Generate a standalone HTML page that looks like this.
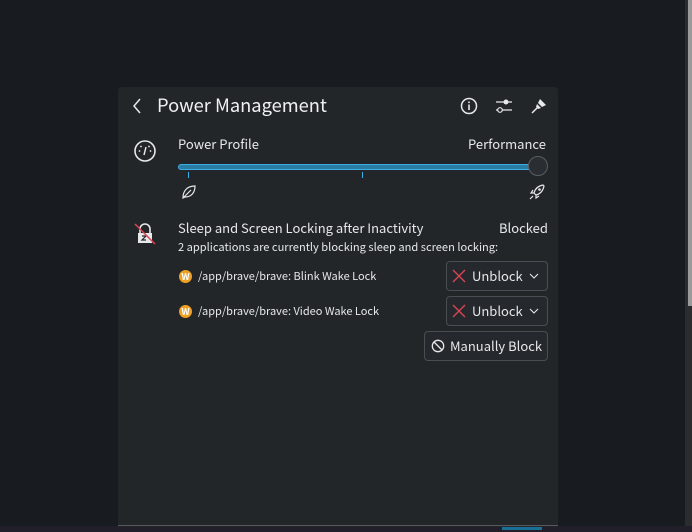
<!DOCTYPE html>
<html><head><style>
*{margin:0;padding:0;box-sizing:border-box}
body{width:692px;height:532px;background:#181b20;position:relative;overflow:hidden;font-family:"Noto Sans CJK SC","Liberation Sans",sans-serif;color:#e6e8ea}
.abs{position:absolute}
#panel{left:118px;top:87px;width:440px;height:440px;background:#232629;border-radius:4px 4px 0 0}
.t{position:absolute;white-space:nowrap;line-height:1}
.btn{position:absolute;border:1px solid #4a4e53;border-radius:4px;background:#25282c}
</style></head><body>
<div class="abs" style="left:685px;top:0;width:7px;height:532px;background:#2b2c2e"></div>
<div class="abs" style="left:688px;top:0;width:4px;height:306px;background:#9a9a9a"></div>
<div class="abs" style="left:0;top:526px;width:692px;height:6px;background:#221f2a"></div>
<div id="panel" class="abs"></div>
<div class="abs" style="left:118px;top:525px;width:440px;height:1px;background:#55585c"></div>
<div class="abs" style="left:502px;top:527px;width:40px;height:3px;background:#1a6f96"></div>

<svg class="abs" style="left:130px;top:97px" width="14" height="18"><path d="M10 2 L4 9 L10 16" stroke="#e6e8ea" stroke-width="1.5" fill="none"/></svg>
<div class="t" style="left:157px;top:96px;font-size:18.3px;color:#eef0f2">Power Management</div>
<svg class="abs" style="left:459px;top:96px" width="20" height="20"><circle cx="10" cy="10" r="7.5" stroke="#e6e8ea" stroke-width="1.5" fill="none"/><rect x="9.2" y="8.5" width="1.6" height="5.5" fill="#e6e8ea"/><rect x="9.2" y="5.5" width="1.6" height="1.6" fill="#e6e8ea"/></svg>
<svg class="abs" style="left:494px;top:96px" width="20" height="20"><path d="M2 6 H18 M2 14 H18" stroke="#e6e8ea" stroke-width="1.3"/><circle cx="12" cy="6" r="2.5" fill="#e6e8ea"/><circle cx="6" cy="14" r="2.3" fill="#232629" stroke="#e6e8ea" stroke-width="1.2"/></svg>
<svg class="abs" style="left:529px;top:96px" width="20" height="20"><path d="M11 3 L17 9 L13 11 L9 7 Z" fill="#e6e8ea"/><path d="M8 8 L12 12 L9 13 L7 11 Z" fill="#e6e8ea"/><path d="M8 12 L3 17" stroke="#e6e8ea" stroke-width="1.5"/></svg>

<svg class="abs" style="left:133px;top:139px" width="24" height="24"><circle cx="12" cy="12" r="10" stroke="#e6e8ea" stroke-width="1.6" fill="none"/><path d="M11 16 L13 8" stroke="#e6e8ea" stroke-width="1.5"/><circle cx="6.5" cy="12" r=".9" fill="#e6e8ea"/><circle cx="17.5" cy="12" r=".9" fill="#e6e8ea"/><circle cx="8" cy="7.5" r=".9" fill="#e6e8ea"/><circle cx="16" cy="7.5" r=".9" fill="#e6e8ea"/></svg>
<div class="t" style="left:178px;top:137px;font-size:13px">Power Profile</div>
<div class="t" style="left:468px;top:137px;font-size:13px">Performance</div>
<div class="abs" style="left:178px;top:164px;width:358px;height:6px;border-radius:3px;background:#2a7da0;border:1px solid #3daee9"></div>
<div class="abs" style="left:528px;top:156px;width:20px;height:20px;border-radius:50%;background:#2a2d31;border:1px solid #5a5e63"></div>
<div class="abs" style="left:188px;top:172px;width:1px;height:6px;background:#3daee9"></div>
<div class="abs" style="left:362px;top:172px;width:1px;height:6px;background:#3daee9"></div>
<svg class="abs" style="left:180px;top:183px" width="18" height="18"><path d="M3 15 C3 8 7 3 15 3 C15 10 11 14 5 14 Z M3 15 L11 7" stroke="#e6e8ea" stroke-width="1.2" fill="none"/></svg>
<svg class="abs" style="left:528px;top:183px" width="18" height="18"><path d="M15 2 C10 3 7 6 6 10 L8 12 C12 11 15 8 16 3 Z M6 10 L3 10 L5 7 M8 12 L8 15 L11 13 M5 13 L2 16" stroke="#e6e8ea" stroke-width="1.2" fill="none"/><circle cx="11.5" cy="6.5" r="1.3" fill="#e6e8ea"/></svg>

<svg class="abs" style="left:133px;top:222px" width="24" height="24"><path d="M7 11 V7 a5 5 0 0 1 10 0 V11" stroke="#e6e8ea" stroke-width="1.6" fill="none"/><rect x="5" y="11" width="14" height="10" fill="#e6e8ea"/><path d="M9 14 H13 L9 18 H13" stroke="#232629" stroke-width="1.2" fill="none"/><path d="M2 2 L22 22" stroke="#da4453" stroke-width="1.5"/></svg>
<div class="t" style="left:178px;top:221px;font-size:13px">Sleep and Screen Locking after Inactivity</div>
<div class="t" style="left:499px;top:221px;font-size:13px">Blocked</div>
<div class="t" style="left:178px;top:242px;font-size:11.1px">2 applications are currently blocking sleep and screen locking:</div>

<div class="abs" style="left:179px;top:270px;width:13px;height:13px;border-radius:50%;background:#f0a020;color:#fff;font-size:9px;text-align:center;line-height:13px;font-weight:bold">W</div>
<div class="t" style="left:198px;top:271px;font-size:11px">/app/brave/brave: Blink Wake Lock</div>
<div class="abs" style="left:179px;top:305px;width:13px;height:13px;border-radius:50%;background:#f0a020;color:#fff;font-size:9px;text-align:center;line-height:13px;font-weight:bold">W</div>
<div class="t" style="left:198px;top:306px;font-size:11px">/app/brave/brave: Video Wake Lock</div>

<div class="btn" style="left:446px;top:261px;width:102px;height:30px"></div>
<svg class="abs" style="left:452px;top:269px" width="14" height="14"><path d="M1 1 L13 13 M13 1 L1 13" stroke="#da4453" stroke-width="1.4"/></svg>
<div class="t" style="left:472px;top:269px;font-size:13px">Unblock</div>
<svg class="abs" style="left:529px;top:272px" width="10" height="8"><path d="M1 2 L5 6 L9 2" stroke="#e6e8ea" stroke-width="1.1" fill="none"/></svg>

<div class="btn" style="left:446px;top:296px;width:102px;height:30px"></div>
<svg class="abs" style="left:452px;top:304px" width="14" height="14"><path d="M1 1 L13 13 M13 1 L1 13" stroke="#da4453" stroke-width="1.4"/></svg>
<div class="t" style="left:472px;top:304px;font-size:13px">Unblock</div>
<svg class="abs" style="left:529px;top:307px" width="10" height="8"><path d="M1 2 L5 6 L9 2" stroke="#e6e8ea" stroke-width="1.1" fill="none"/></svg>

<div class="btn" style="left:424px;top:331px;width:124px;height:30px"></div>
<svg class="abs" style="left:431px;top:339px" width="14" height="14"><circle cx="7" cy="7" r="5.7" stroke="#e6e8ea" stroke-width="1.3" fill="none"/><path d="M3 3 L11 11" stroke="#e6e8ea" stroke-width="1.3"/></svg>
<div class="t" style="left:450px;top:339px;font-size:13px">Manually Block</div>
</body></html>
